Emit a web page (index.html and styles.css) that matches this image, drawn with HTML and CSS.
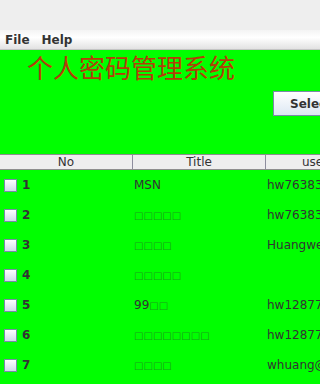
FILE: index.html
```html
<!DOCTYPE html>
<html>
<head>
<meta charset="utf-8">
<link rel="stylesheet" href="styles.css">
</head>
<body>
<div class="topbar"></div>
<div class="menubar"><span class="menu">File</span><span class="menu">Help</span></div>
<div class="content">
  <div class="title">个人密码管理系统</div>
  <div class="btnrow"><button class="btn">Select...</button></div>
  <div class="table">
    <div class="row head">
      <div class="hc">No</div><div class="hc">Title</div><div class="hc">username</div>
    </div>
    <div class="row">
      <div class="c no"><span class="cb"></span><b>1</b></div><div class="c">MSN</div><div class="c">hw763834@msn.com</div>
    </div>
    <div class="row">
      <div class="c no"><span class="cb"></span><b>2</b></div><div class="c tofu">□□□□□</div><div class="c">hw763834@163.com</div>
    </div>
    <div class="row">
      <div class="c no"><span class="cb"></span><b>3</b></div><div class="c tofu">□□□□</div><div class="c">Huangweiqq</div>
    </div>
    <div class="row">
      <div class="c no"><span class="cb"></span><b>4</b></div><div class="c tofu">□□□□□</div><div class="c"></div>
    </div>
    <div class="row">
      <div class="c no"><span class="cb"></span><b>5</b></div><div class="c">99<span class="tofu">□□</span></div><div class="c">hw12877@qq.com</div>
    </div>
    <div class="row">
      <div class="c no"><span class="cb"></span><b>6</b></div><div class="c tofu">□□□□□□□□</div><div class="c">hw12877@126.com</div>
    </div>
    <div class="row">
      <div class="c no"><span class="cb"></span><b>7</b></div><div class="c tofu">□□□□</div><div class="c">whuang@mail.com</div>
    </div>
  </div>
</div>
</body>
</html>
```
FILE: styles.css
```css
html, body {
  margin: 0;
  padding: 0;
  width: 320px;
  height: 384px;
  overflow: hidden;
  background: #00ff00;
  font-family: "DejaVu Sans", sans-serif;
  font-size: 12px;
  color: #333333;
}
.topbar {
  height: 30px;
  background: #eeeeee;
}
.menubar {
  height: 19px;
  border-bottom: 1px solid #c4c4c4;
  background: linear-gradient(#f4f4f4, #ffffff 40%, #e2e2e2);
  display: flex;
  align-items: center;
  padding-left: 5px;
  gap: 12px;
}
.menu {
  font-weight: bold;
  color: #333333;
}
.content {
  background: #00ff00;
  height: 334px;
}
.title {
  padding-left: 27px;
  height: 34px;
  line-height: 34px;
  font-family: "Noto Sans CJK SC", sans-serif;
  font-size: 26px;
  color: #b43c08;
}
.btnrow {
  display: flex;
  padding-left: 273px;
  margin-top: 7px;
  height: 25px;
}
.btn {
  flex: none;
  height: 25px;
  width: 90px;
  padding: 0 0 0 16px;
  text-align: left;
  border: 1px solid #7a8aa9;
  background: linear-gradient(#ffffff, #dde8f3);
  font-family: "DejaVu Sans", sans-serif;
  font-size: 12px;
  font-weight: bold;
  color: #333333;
}
.table {
  margin-top: 38px;
  width: 400px;
}
.row {
  display: grid;
  grid-template-columns: 133px 133px 133px;
  height: 30px;
}
.row.head {
  height: 14px;
  border-top: 1px solid #8e8e8e;
  border-bottom: 1px solid #8e8e8e;
  background: #eeeeee;
}
.hc {
  border-right: 1px solid #8e8e9e;
  text-align: center;
  line-height: 14px;
  color: #333333;
}
.c {
  display: flex;
  align-items: center;
  padding-left: 1px;
  white-space: nowrap;
  overflow: hidden;
  color: #333333;
}
.c.no {
  padding-left: 4px;
  gap: 5px;
}
.cb {
  width: 11px;
  height: 11px;
  border: 1px solid #7a8aa9;
  background: linear-gradient(#ffffff, #cfdcea);
}
.tofu {
  color: #1c9e1c;
  font-family: "DejaVu Sans", sans-serif;
  font-size: 10px;
  letter-spacing: 0;
}
```
